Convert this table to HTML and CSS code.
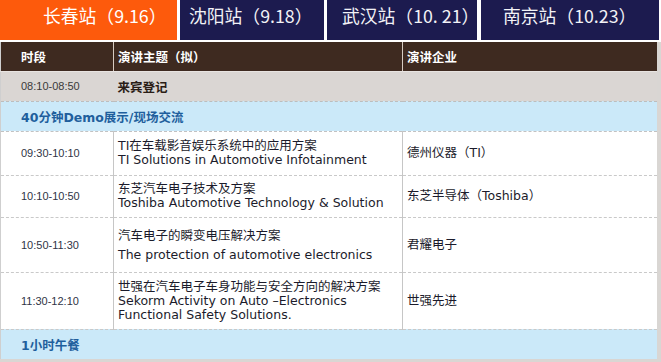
FILE: index.html
```html
<!DOCTYPE html>
<html lang="zh-CN">
<head>
<meta charset="utf-8">
<title>Schedule</title>
<link rel="stylesheet" href="styles.css">
</head>
<body>
<div class="page">
  <nav class="tabs">
    <div class="tab tab-active t1">长春站（9.16）</div>
    <div class="tab t2">沈阳站（9.18）</div>
    <div class="tab t3">武汉站（10. 21）</div>
    <div class="tab t4">南京站（10.23）</div>
  </nav>
  <div class="board">
    <table class="agenda">
      <colgroup>
        <col class="c-time">
        <col class="c-topic">
        <col class="c-co">
      </colgroup>
      <thead>
        <tr class="head">
          <th class="col-time">时段</th>
          <th class="col-topic">演讲主题（拟）</th>
          <th class="col-co">演讲企业</th>
        </tr>
      </thead>
      <tbody>
        <tr class="reg">
          <td class="col-time">08:10-08:50</td>
          <td class="reg-title" colspan="2">来宾登记</td>
        </tr>
        <tr class="band">
          <td colspan="3">40分钟Demo展示/现场交流</td>
        </tr>
        <tr class="talk h44">
          <td class="col-time">09:30-10:10</td>
          <td class="col-topic">TI在车载影音娱乐系统中的应用方案<br>TI Solutions in Automotive Infotainment</td>
          <td class="col-co">德州仪器（TI）</td>
        </tr>
        <tr class="talk h42">
          <td class="col-time">10:10-10:50</td>
          <td class="col-topic">东芝汽车电子技术及方案<br>Toshiba Automotive Technology &amp; Solution</td>
          <td class="col-co">东芝半导体（Toshiba）</td>
        </tr>
        <tr class="talk h55">
          <td class="col-time">10:50-11:30</td>
          <td class="col-topic loose">汽车电子的瞬变电压解决方案<br>The protection of automotive electronics</td>
          <td class="col-co">君耀电子</td>
        </tr>
        <tr class="talk h57">
          <td class="col-time">11:30-12:10</td>
          <td class="col-topic">世强在汽车电子车身功能与安全方向的解决方案<br>Sekorm Activity on Auto –Electronics<br>Functional Safety Solutions.</td>
          <td class="col-co">世强先进</td>
        </tr>
        <tr class="band lunch">
          <td colspan="3">1小时午餐</td>
        </tr>
      </tbody>
    </table>
  </div>
</div>
</body>
</html>
```
FILE: styles.css
```css
* { box-sizing: border-box; }
html, body { margin: 0; padding: 0; background: #ffffff; }
.page { width: 661px; height: 362px; overflow: hidden; }

.tabs {
  display: flex;
  height: 40px;
  width: 659px;
}
.tab {
  height: 40px;
  background: #1c1b4f;
  color: #f2f2f6;
  font-family: "Noto Sans CJK SC", "Noto Sans", sans-serif;
  font-size: 17.8px;
  line-height: 22px;
  padding-top: 4px;
  white-space: nowrap;
}
.tab-active { background: #fd5a0c; color: #fff; }
.t1 { width: 177px; padding-left: 43px; }
.t2 { width: 144px; margin-left: 3px; padding-left: 9px; }
.t3 { width: 150px; margin-left: 3px; padding-left: 15px; }
.t4 { width: 178px; margin-left: 4px; padding-left: 22px; }

.board {
  margin-top: 2px;
  background: #d9d6d3;
  height: 330px;
  width: 661px;
}
.agenda {
  width: 656px;
  table-layout: fixed;
  border-collapse: collapse;
  border-left: 1px solid #cfcfcf;
}
.c-time { width: 113px; }
.c-topic { width: 289px; }
.c-co { width: 254px; }

.agenda th, .agenda td { padding: 0; vertical-align: middle; text-align: left; }

.head { height: 29px; background: #3e2a20; }
.head th {
  color: #ffffff;
  font-family: "Noto Sans CJK SC", sans-serif;
  font-weight: 700;
  font-size: 12.5px;
  border-bottom: 1px solid #e8e4e1;
}
.head .col-topic, .head .col-co { border-left: 1px solid #d6cbc2; }

.col-time { padding-left: 20px !important; }
.col-topic { padding-left: 4px !important; }
.col-co { padding-left: 4px !important; }

.reg { height: 30px; background: #dad6d3; }
.reg td { border-bottom: 1px dashed #bdbdbd; }
.reg .col-time {
  font-family: "Liberation Sans", sans-serif;
  font-size: 11px;
  color: #3a3a3a;
}
.reg-title {
  padding-left: 4px !important;
  font-family: "Noto Sans CJK SC", sans-serif;
  font-weight: 700;
  font-size: 12.5px;
  color: #2a1d16;
}

.band { height: 30px; background: #cbe9f9; }
.band td {
  padding-left: 20px !important;
  font-family: "DejaVu Sans", "Noto Sans CJK SC", sans-serif;
  font-weight: 700;
  font-size: 12.5px;
  color: #1f5f9d;
  border-bottom: 1px dashed #c2c2c2;
}
.lunch td { border-bottom: none; }

.talk { background: #ffffff; }
.talk td { border-bottom: 1px dashed #c9c9c9; }
.talk .col-topic, .talk .col-co { border-left: 1px solid #c6c6c6; }
.talk .col-time {
  font-family: "Liberation Sans", sans-serif;
  font-size: 11px;
  color: #2f3446;
}
.talk .col-topic, .talk .col-co {
  font-family: "DejaVu Sans", "Noto Sans CJK SC", sans-serif;
  font-size: 12.5px;
  line-height: 14px;
  color: #1b1b2b;
}
.talk .loose { line-height: 19px; }

.h44 { height: 44px; }
.h42 { height: 42px; }
.h55 { height: 55px; }
.h57 { height: 57px; }
```
